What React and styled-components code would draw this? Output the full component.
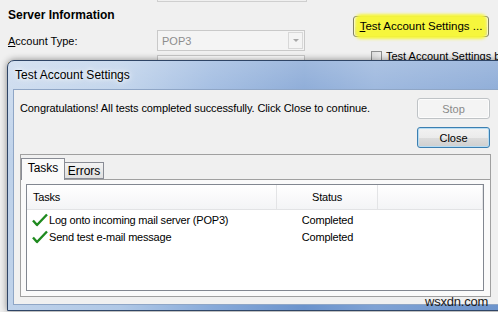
import styled, { createGlobalStyle } from 'styled-components';

const GlobalStyle = createGlobalStyle`
  html, body {
    margin: 0;
    padding: 0;
    background: #f0f0f0;
  }
  body {
    font-family: 'Liberation Sans', Arial, sans-serif;
    font-size: 11px;
    color: #000;
  }
`;

const Screen = styled.div`
  position: relative;
  width: 498px;
  height: 312px;
  overflow: hidden;
  background: #f0f0f0;
`;

const Backdrop = styled.div`
  display: grid;
  grid-template-columns: 345px 1fr;
`;

const LeftCol = styled.div`
  display: flex;
  flex-direction: column;
  padding-left: 8px;
`;

const RightCol = styled.div`
  display: flex;
  flex-direction: column;
  padding-left: 8px;
`;

const FieldStub = styled.div`
  margin-left: 149px;
  width: 148px;
  height: 1px;
  border: 1px solid #cfcfcf;
  border-top: none;
`;

const SectionTitle = styled.div`
  margin-top: 6px;
  font-size: 12px;
  font-weight: bold;
  line-height: 14px;
`;

const FieldRow = styled.div`
  display: flex;
  align-items: center;
  margin-top: ${(p) => p.$gap}px;
`;

const Label = styled.div`
  width: 149px;
  line-height: 14px;
`;

const Combo = styled.div`
  box-sizing: border-box;
  width: 148px;
  height: 21px;
  display: flex;
  align-items: center;
  justify-content: space-between;
  border: 1px solid #c9c9c9;
  background: #f4f4f4;
  color: #8d8d8d;
  padding-left: 4px;
`;

const ComboArrow = styled.div`
  width: 15px;
  height: 17px;
  margin-right: 1px;
  border: 1px solid #d8d8d8;
  box-sizing: border-box;
  display: flex;
  align-items: center;
  justify-content: center;
  &::after {
    content: '';
    border-left: 3px solid transparent;
    border-right: 3px solid transparent;
    border-top: 3px solid #a8a8a8;
  }
`;

const TextBox = styled.div`
  box-sizing: border-box;
  width: 148px;
  height: 21px;
  border: 1px solid #c9c9c9;
  background: #fff;
`;

const WinButton = styled.div`
  box-sizing: border-box;
  width: ${(p) => p.$w}px;
  height: ${(p) => p.$h || 21}px;
  display: flex;
  align-items: center;
  justify-content: center;
  white-space: nowrap;
  border: 1px solid ${(p) => (p.$disabled ? '#bfc3c6' : p.$default ? '#3c7fb1' : '#707070')};
  border-radius: 3px;
  color: ${(p) => (p.$disabled ? '#8a8a8a' : '#000')};
  background: ${(p) =>
    p.$disabled
      ? '#f4f4f4'
      : 'linear-gradient(#f2f2f2 0%, #ebebeb 50%, #dddddd 51%, #cfcfcf 100%)'};
  box-shadow: ${(p) => (p.$default ? 'inset 0 0 0 1px #b6dcf3' : 'inset 0 0 0 1px #fcfcfc')};
`;

const Highlight = styled.span`
  background: #f6f63c;
  box-shadow: 0 0 3px 3px #f6f63c;
  padding: 3px 2px 4px;
  border-radius: 3px;
  font-size: 11.5px;
  white-space: nowrap;
`;

const CheckRow = styled.div`
  display: flex;
  align-items: center;
  gap: 4px;
  margin-top: 13px;
  padding-left: 18px;
  white-space: nowrap;
`;

const CheckBox = styled.div`
  width: 11px;
  height: 11px;
  box-sizing: border-box;
  border: 1px solid #8e8f8f;
  background: linear-gradient(135deg, #dcdcdc, #fbfbfb);
`;

const Dialog = styled.div`
  position: absolute;
  left: 7px;
  top: 60px;
  width: 512px;
  height: 251px;
  box-sizing: border-box;
  display: flex;
  flex-direction: column;
  border: 1px solid #2f4566;
  border-radius: 7px 7px 0 0;
  padding: 0 5px 5px 5px;
  background:
    linear-gradient(rgba(255, 255, 255, 0.35), rgba(255, 255, 255, 0) 40%),
    linear-gradient(90deg, #bfd2ea 0%, #b0c8e6 22%, #88aad9 40%, #6b93cc 58%, #7fa2d4 72%, #6a92cb 100%);
  box-shadow: 0 0 7px rgba(0, 0, 0, 0.45);
`;

const TitleBar = styled.div`
  height: 28px;
  display: flex;
  align-items: center;
  padding-left: 2px;
  font-size: 12px;
  text-shadow: 0 0 8px #fff, 0 0 4px #fff;
`;

const Content = styled.div`
  flex: 1;
  box-sizing: border-box;
  border: 1px solid #8fa6c6;
  background: #f0f0f0;
  padding: 8px 0 0 6px;
`;

const MessageRow = styled.div`
  width: 470px;
  display: flex;
  justify-content: space-between;
`;

const Message = styled.div`
  margin-top: 3px;
  line-height: 14px;
  letter-spacing: -0.1px;
`;

const ButtonStack = styled.div`
  display: flex;
  flex-direction: column;
  gap: 8px;
`;

const Frame = styled.div`
  margin-top: 6px;
  width: 471px;
  height: 143px;
  box-sizing: border-box;
  border: 1px solid #a0a0a0;
  display: flex;
  flex-direction: column;
`;

const TabStrip = styled.div`
  height: 24px;
  display: flex;
  align-items: flex-end;
`;

const Tab = styled.div`
  position: relative;
  box-sizing: border-box;
  width: ${(p) => p.$w}px;
  height: ${(p) => (p.$active ? 22 : 17)}px;
  margin-bottom: ${(p) => (p.$active ? -1 : 0)}px;
  z-index: ${(p) => (p.$active ? 1 : 0)};
  border: 1px solid #898c95;
  border-bottom: ${(p) => (p.$active ? 'none' : '1px solid #898c95')};
  border-left: ${(p) => (p.$active ? '1px solid #898c95' : 'none')};
  background: ${(p) => (p.$active ? '#fafafa' : 'linear-gradient(#f3f3f3, #e0e0e0)')};
  display: flex;
  align-items: center;
  justify-content: center;
  padding-bottom: ${(p) => (p.$active ? 3 : 0)}px;
  font-size: 12px;
`;

const TabPanel = styled.div`
  flex: 1;
  border-top: 1px solid #a0a0a0;
  background: #fafafa;
  padding: 4px 6px 5px 5px;
  display: flex;
`;

const List = styled.div`
  flex: 1;
  border: 1px solid #828790;
  background: #fff;
  letter-spacing: -0.2px;
`;

const HeaderRow = styled.div`
  display: flex;
  height: 24px;
  background: linear-gradient(#ffffff, #f3f4f6);
  border-bottom: 1px solid #e2e3e5;
`;

const HeaderCell = styled.div`
  width: ${(p) => p.$w}px;
  box-sizing: border-box;
  display: flex;
  align-items: center;
  justify-content: ${(p) => (p.$center ? 'center' : 'flex-start')};
  padding-left: ${(p) => (p.$center ? 0 : 6)}px;
  border-right: 1px solid #e3e4e6;
`;

const Rows = styled.div`
  padding-top: 1px;
`;

const Row = styled.div`
  display: flex;
  height: 17px;
  align-items: center;
`;

const TaskCell = styled.div`
  width: 250px;
  display: flex;
  align-items: center;
  padding-left: 5px;
  gap: 1px;
  box-sizing: border-box;
`;

const StatusCell = styled.div`
  width: 101px;
  text-align: center;
`;

const Watermark = styled.div`
  position: absolute;
  left: 425px;
  top: 294px;
  font-size: 13px;
  color: #1a1a1a;
  letter-spacing: -0.2px;
`;

const Tick = () => (
  <svg width="16" height="14" viewBox="0 0 16 14">
    <path d="M1 7.5 L5 12 L15 1.5" fill="none" stroke="#1f8a1f" strokeWidth="2.4" strokeLinejoin="round" />
  </svg>
);

const tasks = ['Log onto incoming mail server (POP3)', 'Send test e-mail message'];

export default function App() {
  return (
    <Screen>
      <GlobalStyle />
      <Backdrop>
        <LeftCol>
          <FieldStub />
          <SectionTitle>Server Information</SectionTitle>
          <FieldRow $gap={8}>
            <Label>
              <u>A</u>ccount Type:
            </Label>
            <Combo>
              POP3
              <ComboArrow />
            </Combo>
          </FieldRow>
          <FieldRow $gap={4}>
            <Label>
              <u>I</u>ncoming mail server:
            </Label>
            <TextBox />
          </FieldRow>
        </LeftCol>
        <RightCol>
          <WinButton $w={136} style={{ marginTop: 16 }}>
            <Highlight>
              <u>T</u>est Account Settings ...
            </Highlight>
          </WinButton>
          <CheckRow>
            <CheckBox />
            Test Account Settings by clicking the Next button
          </CheckRow>
        </RightCol>
      </Backdrop>

      <Dialog>
        <TitleBar>Test Account Settings</TitleBar>
        <Content>
          <MessageRow>
            <Message>Congratulations! All tests completed successfully. Click Close to continue.</Message>
            <ButtonStack>
              <WinButton $w={73} $disabled>
                Stop
              </WinButton>
              <WinButton $w={73} $default>
                Close
              </WinButton>
            </ButtonStack>
          </MessageRow>
          <Frame>
            <TabStrip>
              <Tab $w={44} $active>
                Tasks
              </Tab>
              <Tab $w={39}>Errors</Tab>
            </TabStrip>
            <TabPanel>
              <List>
                <HeaderRow>
                  <HeaderCell $w={250}>Tasks</HeaderCell>
                  <HeaderCell $w={101} $center>
                    Status
                  </HeaderCell>
                  <HeaderCell $w={105} />
                </HeaderRow>
                <Rows>
                  {tasks.map((t) => (
                    <Row key={t}>
                      <TaskCell>
                        <Tick />
                        {t}
                      </TaskCell>
                      <StatusCell>Completed</StatusCell>
                    </Row>
                  ))}
                </Rows>
              </List>
            </TabPanel>
          </Frame>
        </Content>
      </Dialog>
      <Watermark>wsxdn.com</Watermark>
    </Screen>
  );
}
